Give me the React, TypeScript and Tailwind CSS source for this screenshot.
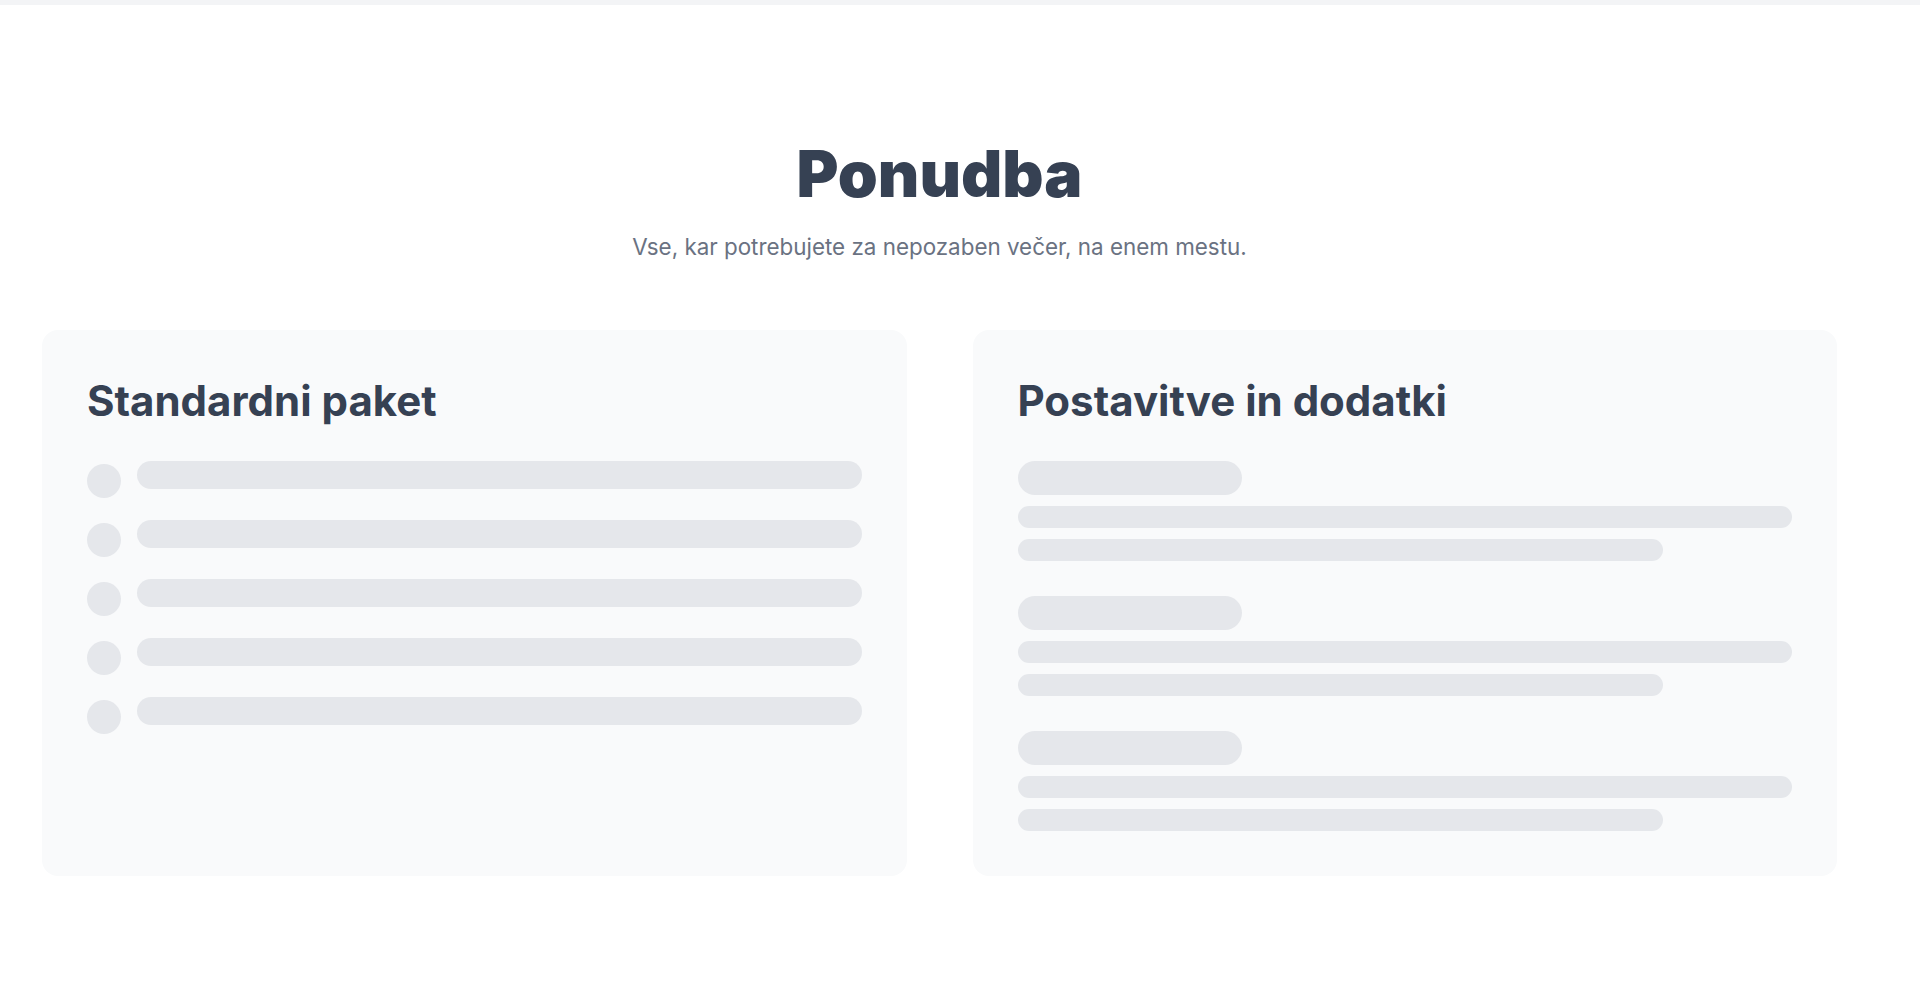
import React from "react";

const font = { fontFamily: "Inter, 'Noto Sans', sans-serif" };

function ListRow() {
  return (
    <div className="flex items-start gap-4">
      <div className="mt-[3px] size-[34px] shrink-0 rounded-full bg-gray-200" />
      <div className="h-[28px] flex-1 rounded-full bg-gray-200" />
    </div>
  );
}

function AddonGroup() {
  return (
    <div className="flex flex-col gap-[11px]">
      <div className="h-[34px] w-[224px] rounded-full bg-gray-200" />
      <div className="h-[22px] w-full rounded-full bg-gray-200" />
      <div className="h-[22px] w-5/6 rounded-full bg-gray-200" />
    </div>
  );
}

export default function App() {
  return (
    <div className="min-h-screen w-full bg-white" style={font}>
      <div className="h-[5px] w-full bg-gray-100" />

      <section className="pl-[42px] pr-[83px] pt-[137px] pb-[130px]">
        <div className="flex flex-col items-center text-center">
          <h1 className="text-[64px] leading-[64px] font-black text-gray-700">
            Ponudba
          </h1>
          <p className="mt-[26px] text-[22.4px] leading-[30px] text-gray-500">
            Vse, kar potrebujete za nepozaben večer, na enem mestu.
          </p>
        </div>

        <div className="mt-[68px] grid grid-cols-2 gap-[66px]">
          {/* standardni paket */}
          <div className="rounded-2xl bg-gray-50 p-[45px]">
            <h2 className="text-[42px] leading-[52px] font-bold text-gray-700">
              Standardni paket
            </h2>
            <div className="mt-[34px] flex flex-col gap-[22px]">
              <ListRow />
              <ListRow />
              <ListRow />
              <ListRow />
              <ListRow />
            </div>
          </div>

          {/* postavitve in dodatki */}
          <div className="rounded-2xl bg-gray-50 p-[45px]">
            <h2 className="text-[42px] leading-[52px] font-bold text-gray-700">
              Postavitve in dodatki
            </h2>
            <div className="mt-[34px] flex flex-col gap-[35px]">
              <AddonGroup />
              <AddonGroup />
              <AddonGroup />
            </div>
          </div>
        </div>
      </section>
    </div>
  );
}
